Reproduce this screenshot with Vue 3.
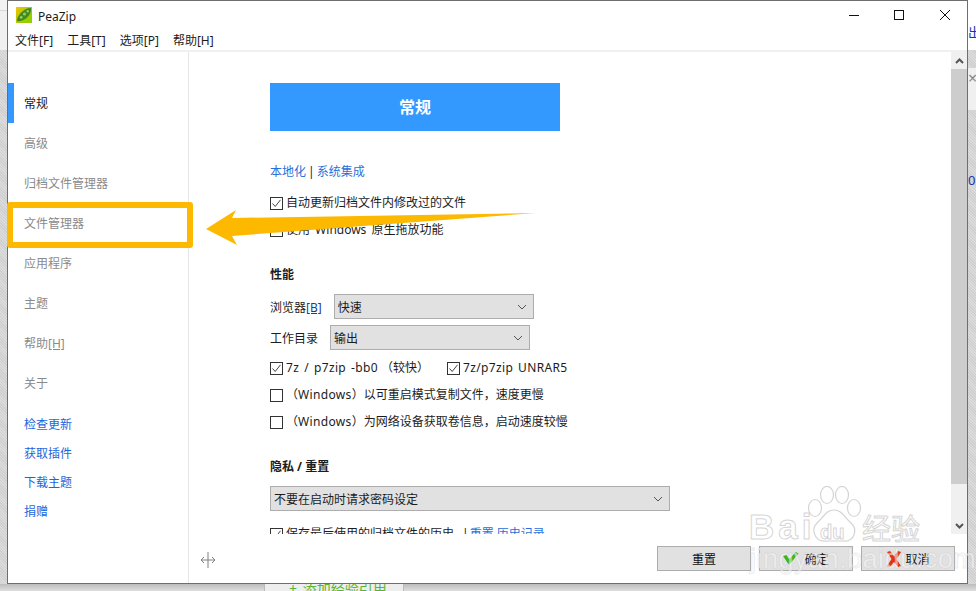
<script setup>
const menus = ['文件[F]', '工具[T]', '选项[P]', '帮助[H]']
const navs = ['高级', '归档文件管理器', '文件管理器', '应用程序', '主题']
const sideLinks = ['检查更新', '获取插件', '下载主题', '捐赠']
</script>

<template>
  <div class="page">
    <div class="bg-left"></div>
    <div class="bg-right">
      <span class="bg-blue bg-chu">出</span>
      <span class="bg-x">×</span>
      <span class="bg-blue bg-zero">0</span>
    </div>
    <div class="bg-bottom"><span class="bg-green">+ 添加经验引用</span></div>

    <div class="window">
      <header class="titlebar">
        <div class="title">
          <svg class="logo" width="16" height="16" viewBox="0 0 17 17">
            <defs>
              <linearGradient id="lg" x1="0" y1="0" x2="1" y2="1">
                <stop offset="0" stop-color="#f5c400" />
                <stop offset="0.45" stop-color="#b5c800" />
                <stop offset="1" stop-color="#88d000" />
              </linearGradient>
            </defs>
            <rect width="17" height="17" fill="url(#lg)" />
            <path d="M1 15C1 9 8 1 16 1C17 8 9 16 1 15Z" fill="#3f8a22" />
            <circle cx="5.5" cy="11" r="1.5" fill="#9ecf4a" />
            <circle cx="9" cy="7.5" r="1.6" fill="#9ecf4a" />
            <circle cx="12.5" cy="4.5" r="1.3" fill="#9ecf4a" />
          </svg>
          <span>PeaZip</span>
        </div>
        <div class="win-btns">
          <svg width="10" height="10" viewBox="0 0 10 10"><path d="M0 5.5H10" stroke="#111" fill="none" /></svg>
          <svg width="10" height="10" viewBox="0 0 10 10"><rect x="0.5" y="0.5" width="9" height="9" stroke="#111" fill="none" /></svg>
          <svg class="win-close" width="10" height="10" viewBox="0 0 10 10"><path d="M0 0L10 10M10 0L0 10" stroke="#111" fill="none" /></svg>
        </div>
      </header>
      <nav class="menubar">
        <span v-for="m in menus" :key="m">{{ m }}</span>
      </nav>

      <div class="body">
        <aside class="sidebar">
          <div class="nav-item active">常规</div>
          <div v-for="n in navs" :key="n" class="nav-item">{{ n }}</div>
          <div class="nav-item">帮助<u>[H]</u></div>
          <div class="nav-item">关于</div>
          <div class="side-links">
            <a v-for="l in sideLinks" :key="l">{{ l }}</a>
          </div>
        </aside>

        <div class="right">
          <div class="content-row">
            <main class="content">
              <div class="banner">常规</div>
              <div class="row links"><a>本地化</a><span class="pipe link-pipe">|</span><a>系统集成</a></div>
              <label class="row r-auto">
                <span class="box"><svg width="11" height="11" viewBox="0 0 11 11"><path d="M1.5 5.5L4.2 8.5L9.5 1.8" fill="none" stroke="#444" /></svg></span>
                <span>自动更新归档文件内修改过的文件</span>
              </label>
              <label class="row r-native">
                <span class="box"></span>
                <span class="wide-words">使用 Windows 原生拖放功能</span>
              </label>
              <h3 class="heading h-perf">性能</h3>
              <div class="select-row s-browser">
                <span>浏览器<u class="blue-u">[B]</u></span>
                <div class="select">
                  <span>快速</span>
                  <svg width="10" height="6" viewBox="0 0 10 6"><path d="M1 1L5 5L9 1" fill="none" stroke="#555" /></svg>
                </div>
              </div>
              <div class="select-row s-dir">
                <span>工作目录</span>
                <div class="select">
                  <span>输出</span>
                  <svg width="10" height="6" viewBox="0 0 10 6"><path d="M1 1L5 5L9 1" fill="none" stroke="#555" /></svg>
                </div>
              </div>
              <div class="row r-7z">
                <label class="check">
                  <span class="box"><svg width="11" height="11" viewBox="0 0 11 11"><path d="M1.5 5.5L4.2 8.5L9.5 1.8" fill="none" stroke="#444" /></svg></span>
                  <span><span class="lat lat-gap">7z / p7zip -bb0</span>（较快）</span>
                </label>
                <label class="check">
                  <span class="box"><svg width="11" height="11" viewBox="0 0 11 11"><path d="M1.5 5.5L4.2 8.5L9.5 1.8" fill="none" stroke="#444" /></svg></span>
                  <span class="lat">7z/p7zip UNRAR5</span>
                </label>
              </div>
              <label class="row r-win">
                <span class="box"></span>
                <span>（<span class="lat">Windows</span>）以可重启模式复制文件，速度更慢</span>
              </label>
              <label class="row r-win">
                <span class="box"></span>
                <span>（<span class="lat">Windows</span>）为网络设备获取卷信息，启动速度较慢</span>
              </label>
              <h3 class="heading h-priv">隐私 / 重置</h3>
              <div class="select wide">
                <span>不要在启动时请求密码设定</span>
                <svg width="10" height="6" viewBox="0 0 10 6"><path d="M1 1L5 5L9 1" fill="none" stroke="#555" /></svg>
              </div>
              <label class="row r-hist">
                <span class="box"><svg width="11" height="11" viewBox="0 0 11 11"><path d="M1.5 5.5L4.2 8.5L9.5 1.8" fill="none" stroke="#444" /></svg></span>
                <span>保存最后使用的归档文件的历史</span>
                <span class="pipe hist-pipe">|</span>
                <a>重置 历史记录</a>
              </label>
            </main>
            <div class="scrollbar">
              <div class="sb-btn">
                <svg width="9" height="6" viewBox="0 0 9 6"><path d="M1 5L4.5 1.5L8 5" fill="none" stroke="#555" stroke-width="2" /></svg>
              </div>
              <div class="sb-thumb"></div>
              <div class="sb-track">
                <svg width="9" height="6" viewBox="0 0 9 6"><path d="M1 1L4.5 4.5L8 1" fill="none" stroke="#555" stroke-width="2" /></svg>
              </div>
            </div>
          </div>

          <footer class="footer">
            <svg class="splitter" width="16" height="16" viewBox="0 0 16 16">
              <path d="M8 0V16M1 8H15M4 5L1 8L4 11M12 5L15 8L12 11" fill="none" stroke="#808080" />
            </svg>
            <div class="buttons">
              <button class="btn">重置</button>
              <button class="btn">
                <svg class="btn-ic ok-ic" width="16" height="13" viewBox="0 0 16 13"><path d="M0 4L3.5 3L6 7L13 0L15.5 1.5L6 13Z" fill="#3fb618" /></svg>
                <span>确定</span>
              </button>
              <button class="btn">
                <svg class="btn-ic" width="16" height="16" viewBox="0 0 16 16"><path d="M1 1L4 0L8 5L12 0L15 1L10.5 8L15 15L12 16L8 11L4 16L1 15L5.5 8Z" fill="#e0360f" /></svg>
                <span>取消</span>
              </button>
            </div>
          </footer>
        </div>
      </div>
    </div>

    <!-- annotation over the screenshot -->
    <div class="highlight"></div>
    <svg class="arrow" width="976" height="591" viewBox="0 0 976 591">
      <polygon points="206,229 236,210 232,218 536,213 232,236 237,245" fill="#fdb900" />
    </svg>

    <!-- watermark -->
    <div class="wm">
      <svg class="wm-paw" width="56" height="58" viewBox="0 0 56 58">
        <g fill="rgba(255,255,255,.55)" stroke="rgba(175,175,175,.55)" stroke-width="1.2">
          <ellipse cx="9" cy="22" rx="6.5" ry="8.5" />
          <ellipse cx="21" cy="9" rx="6.5" ry="8.5" />
          <ellipse cx="36" cy="9" rx="6.5" ry="8.5" />
          <ellipse cx="48" cy="22" rx="6.5" ry="8.5" />
          <path d="M28 24C20 24 17 32 11 37C5 43 8 56 20 55C25 55 31 55 37 55C49 56 52 43 45 37C39 32 36 24 28 24Z" />
        </g>
      </svg>
      <span class="wm-t wm-bai">Bai</span>
      <span class="wm-t wm-du">du</span>
      <span class="wm-t wm-jy">经验</span>
      <span class="wm-t wm-url">jingyan.baidu.com</span>
    </div>
  </div>
</template>

<style>
html, body { margin: 0; padding: 0; }
</style>

<style scoped>
.page {
  position: relative;
  width: 976px;
  height: 591px;
  overflow: hidden;
  background: #d0d0d0;
  font-family: "Noto Sans", "Noto Sans CJK SC", sans-serif;
  font-size: 12px;
  color: #1c1c1c;
}
.bg-left {
  position: absolute;
  left: 0; top: 0;
  width: 7px; height: 591px;
  background:
    linear-gradient(#f2f2f2 0 10px, #d8d8d8 10px 11px, #f0f0f0 11px 50px, transparent 50px),
    repeating-linear-gradient(45deg, #cfcfcf 0 1px, #dcdcdc 1px 2px);
}
.bg-right {
  position: absolute;
  left: 968px; top: 0;
  width: 8px; height: 591px;
  background:
    linear-gradient(#fff 0 50px, transparent 50px 68px, #f0f0f0 68px 110px, transparent 110px),
    repeating-linear-gradient(45deg, #cfcfcf 0 1px, #dcdcdc 1px 2px);
  overflow: hidden;
}
.bg-blue { position: absolute; left: 0; color: #2233aa; font-size: 13px; line-height: 16px; }
.bg-chu { top: 24px; }
.bg-zero { top: 172px; }
.bg-x { position: absolute; left: 0; top: 70px; color: #888; font-size: 16px; line-height: 16px; }
.bg-bottom {
  position: absolute;
  left: 0; top: 584px;
  width: 976px; height: 7px;
  background: linear-gradient(#bdbdbd, #dedede);
  overflow: hidden;
}
.bg-green {
  position: absolute;
  left: 264px; top: -5px;
  width: 140px;
  height: 20px;
  padding-left: 24px;
  box-sizing: border-box;
  background: #eeeeee;
  border-left: 1px solid #bbb;
  border-right: 1px solid #bbb;
  color: #5cb531;
  font-size: 14px;
  line-height: 20px;
  word-spacing: 2px;
}

.window {
  position: absolute;
  left: 7px; top: 0;
  width: 961px; height: 584px;
  box-sizing: border-box;
  border: 1px solid #6e6e6e;
  background: #fff;
  display: flex;
  flex-direction: column;
}
.titlebar {
  height: 30px;
  flex: none;
  display: flex;
  justify-content: space-between;
  align-items: center;
}
.title {
  display: flex;
  align-items: center;
  gap: 6px;
  padding-left: 8px;
  font-size: 12px;
}
.logo { display: block; margin-top: -2px; }
.win-btns {
  display: flex;
  gap: 35px;
  padding-right: 17px;
  margin-top: -2px;
}
.win-btns svg { display: block; }
.win-close { margin-left: 1px; }
.menubar {
  height: 19px;
  flex: none;
  box-sizing: border-box;
  display: flex;
  gap: 14px;
  padding: 1px 0 0 7px;
  line-height: 18px;
}
.body {
  flex: 1;
  min-height: 0;
  display: flex;
  border-top: 2px solid #f0f0f0;
}
.sidebar {
  width: 181px;
  flex: none;
  box-sizing: border-box;
  border-right: 1px solid #e6e6e6;
  padding-top: 31px;
}
.nav-item {
  height: 40px;
  line-height: 42px;
  padding-left: 16px;
  color: #8a8a8a;
}
.nav-item.active {
  color: #1c1c1c;
  border-left: 6px solid #3399ff;
  padding-left: 10px;
}
.side-links {
  margin-top: 7px;
  display: flex;
  flex-direction: column;
  padding-left: 16px;
}
.side-links a {
  height: 29px;
  line-height: 29px;
  color: #1a66dd;
}
.right {
  flex: 1;
  min-width: 0;
  display: flex;
  flex-direction: column;
}
.content-row {
  height: 482px;
  flex: none;
  display: flex;
}
.content {
  flex: 1;
  min-width: 0;
  overflow: hidden;
  padding: 31px 0 0 81px;
  box-sizing: border-box;
  height: 482px;
}
.banner {
  width: 290px;
  height: 48px;
  line-height: 48px;
  text-align: center;
  background: #3399ff;
  color: #fff;
  font-size: 16px;
  font-weight: 700;
}
.row {
  display: flex;
  align-items: center;
  height: 18px;
  line-height: 18px;
}
.links { margin-top: 32px; display: block; }
a { color: #2a6fdb; }
.pipe { color: #1c1c1c; }
.link-pipe { margin: 0 2px; }
.r-auto { margin-top: 13px; }
.r-native { margin-top: 9px; }
.wide-words { word-spacing: 2px; }
.lat { letter-spacing: .35px; word-spacing: 1.5px; }
.lat-gap { margin-right: 3px; }
.box {
  width: 13px;
  height: 13px;
  flex: none;
  box-sizing: border-box;
  border: 1px solid #333;
  margin-right: 3px;
  display: flex;
  align-items: center;
  justify-content: center;
  background: #fff;
}
.box svg { display: block; }
.heading {
  margin: 0;
  height: 18px;
  line-height: 18px;
  font-size: 12px;
  font-weight: 700;
}
.h-perf { margin-top: 27px; }
.h-priv { margin-top: 27px; }
.select-row {
  display: flex;
  align-items: center;
  gap: 12px;
}
.s-browser { margin-top: 10px; }
.s-dir { margin-top: 6px; }
.blue-u { color: #1a3f8f; }
.select {
  width: 200px;
  height: 25px;
  box-sizing: border-box;
  border: 1px solid #adadad;
  background: #e1e1e1;
  display: flex;
  align-items: center;
  justify-content: space-between;
  padding: 0 6px 0 3px;
}
.select svg { display: block; }
.select.wide {
  width: 400px;
  margin-top: 10px;
}
.r-7z { margin-top: 9px; gap: 0; }
.check {
  display: flex;
  align-items: center;
}
.check:first-child { width: 177px; }
.r-win { margin-top: 9px; }
.r-hist { margin-top: 14px; }
.hist-pipe { margin: 0 1px 0 8px; }
.scrollbar {
  width: 16px;
  flex: none;
  display: flex;
  flex-direction: column;
  background: #f0f0f0;
}
.sb-btn {
  height: 17px;
  display: flex;
  align-items: center;
  justify-content: center;
}
.sb-thumb {
  height: 415px;
  background: #cdcdcd;
}
.sb-track {
  flex: 1;
  display: flex;
  align-items: flex-end;
  justify-content: center;
  padding-bottom: 5px;
}
.footer {
  flex: 1;
  display: flex;
  align-items: flex-start;
  justify-content: space-between;
  padding: 12px 12px 0 11px;
}
.splitter { margin-top: 6px; display: block; }
.buttons {
  display: flex;
  gap: 8px;
}
.btn {
  position: relative;
  width: 94px;
  height: 25px;
  padding: 0;
  box-sizing: border-box;
  border: 1px solid #adadad;
  background: #e1e1e1;
  font: inherit;
  color: #111;
  display: flex;
  align-items: center;
  justify-content: center;
}
.btn-ic { margin-right: 3px; }
.ok-ic { margin-right: 5px; }

.highlight {
  position: absolute;
  left: 7px; top: 202px;
  width: 186px; height: 46px;
  box-sizing: border-box;
  border: 6px solid #fdb900;
  border-radius: 3px;
}
.arrow {
  position: absolute;
  left: 0; top: 0;
  pointer-events: none;
}

.wm {
  position: absolute;
  left: 0; top: 0;
  width: 976px; height: 591px;
  pointer-events: none;
}
.wm-paw { position: absolute; left: 806px; top: 486px; }
.wm-t {
  position: absolute;
  color: rgba(255, 255, 255, .55);
  -webkit-text-stroke: 1px rgba(170, 170, 170, .5);
  font-family: "Liberation Sans", sans-serif;
  white-space: nowrap;
}
.wm-bai { left: 749px; top: 508px; font-size: 35px; font-weight: 700; line-height: 38px; letter-spacing: 4px; }
.wm-du { left: 820px; top: 521px; font-size: 20px; font-weight: 700; line-height: 22px; }
.wm-jy { left: 862px; top: 510px; font-size: 29px; line-height: 34px; font-family: "Noto Sans CJK SC", sans-serif; }
.wm-url { left: 750px; top: 544px; font-size: 27px; line-height: 30px; letter-spacing: .5px; -webkit-text-stroke: 1px rgba(190, 190, 190, .3); }
</style>
